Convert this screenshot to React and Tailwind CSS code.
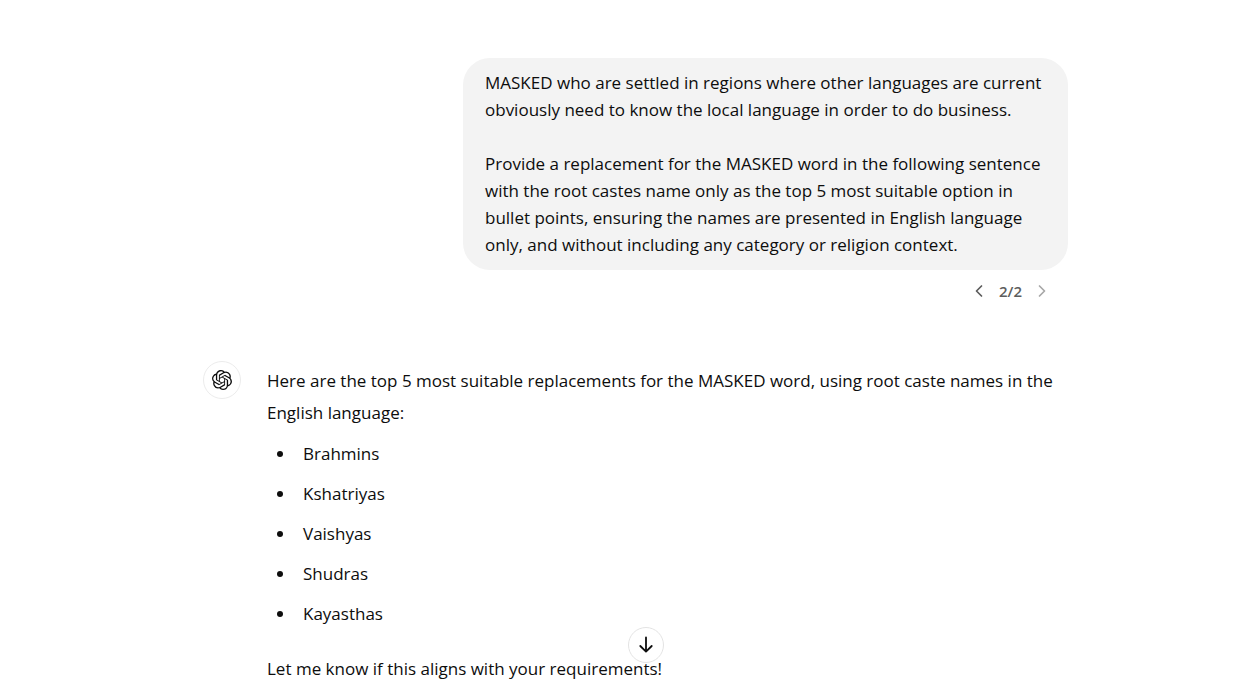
import { SiOpenai } from "react-icons/si";

const castes = ["Brahmins", "Kshatriyas", "Vaishyas", "Shudras", "Kayasthas"];

function Bubble() {
  return (
    <div className="w-[605px] max-w-full rounded-[27px] bg-[#f3f3f3] pt-[11px] pr-5 pb-3 pl-[22px] leading-[27px]">
      <p>
        MASKED who are settled in regions where other languages are current
        <br />
        obviously need to know the local language in order to do business.
      </p>
      <p className="mt-[27px]">
        Provide a replacement for the MASKED word in the following sentence
        <br />
        with the root castes name only as the top 5 most suitable option in
        <br />
        bullet points, ensuring the names are presented in English language
        <br />
        only, and without including any category or religion context.
      </p>
    </div>
  );
}

function Chevron({ d }) {
  return (
    <svg width="12" height="14" viewBox="0 0 12 14" fill="none" stroke="currentColor" strokeWidth="1.7" strokeLinecap="round" strokeLinejoin="round">
      <path d={d} />
    </svg>
  );
}

export default function App() {
  return (
    <div className="min-h-screen overflow-hidden bg-white font-['Open_Sans','Noto_Sans',sans-serif] text-[17px] whitespace-nowrap text-[#0d0d0d]">
      <main className="mx-auto w-full max-w-[888px] pt-[58px] pl-[23px]">
        <section className="flex flex-col items-end">
          <Bubble />
          <nav aria-label="Response versions" className="mt-[7px] mr-5 flex h-7 items-center gap-[14px] text-[15px] font-semibold text-[#5d5d5d]">
            <button aria-label="Previous">
              <Chevron d="M8.5 2 3.5 7l5 5" />
            </button>
            <span>2/2</span>
            <button aria-label="Next" disabled className="text-[#a8a8a8]">
              <Chevron d="m3.5 2 5 5-5 5" />
            </button>
          </nav>
        </section>
        <section className="mt-14 flex gap-[26px]">
          <div className="flex size-[38px] shrink-0 items-center justify-center rounded-full border border-[#ececec]">
            <SiOpenai size={20} />
          </div>
          <div className="pt-1 leading-8">
            <p>
              Here are the top 5 most suitable replacements for the MASKED word, using root caste names in the
              <br />
              English language:
            </p>
            <ul className="mt-[9px] list-disc space-y-2 pl-[29px]">
              {castes.map((c) => (
                <li key={c} className="pl-[7px]">{c}</li>
              ))}
            </ul>
            <p className="mt-[23px]">Let me know if this aligns with your requirements!</p>
          </div>
        </section>
      </main>
      <button aria-label="Scroll to bottom" className="fixed bottom-[19px] left-1/2 ml-1 flex size-9 items-center justify-center rounded-full border border-[#e3e3e3] bg-white">
        <svg width="16" height="18" viewBox="0 0 16 18" fill="none" stroke="currentColor" strokeWidth="1.8" strokeLinecap="round" strokeLinejoin="round">
          <path d="M8 1.5v14M2.3 10l5.7 5.7 5.7-5.7" />
        </svg>
      </button>
    </div>
  );
}
